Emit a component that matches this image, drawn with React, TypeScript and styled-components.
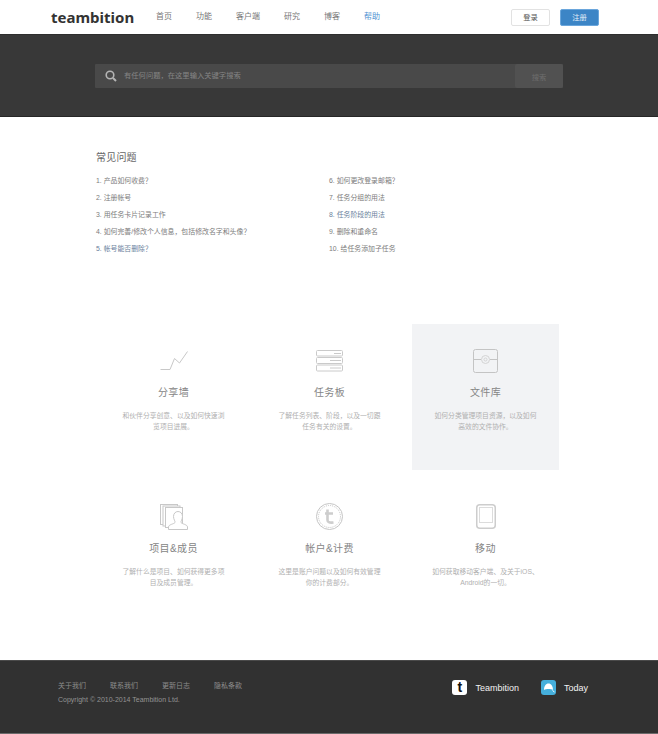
import styled, { createGlobalStyle } from "styled-components";

const leftFaq = [
  "1. 产品如何收费？",
  "2. 注册帐号",
  "3. 用任务卡片记录工作",
  "4. 如何完善/修改个人信息，包括修改名字和头像？",
  "5. 帐号能否删除？",
];

const rightFaq = [
  "6. 如何更改登录邮箱？",
  "7. 任务分组的用法",
  "8. 任务阶段的用法",
  "9. 删除和重命名",
  "10. 给任务添加子任务",
];

const ChartIcon = () => (
  <svg width="28" height="20" viewBox="0 0 28 20" fill="none" stroke="#c8c8c8">
    <path d="M0.5 18.5H10L14.5 7.5L19.5 12L27.5 0.5" />
  </svg>
);

const BoardIcon = () => (
  <svg width="27" height="22" viewBox="0 0 27 22" fill="none" stroke="#cacaca">
    <rect x="0.5" y="0.5" width="26" height="5.5" rx="1" />
    <rect x="0.5" y="7.5" width="26" height="6" rx="1" />
    <rect x="0.5" y="15" width="26" height="6" rx="1" />
    <path d="M18 3.5H25M14 10.5H25M14 18H25" />
  </svg>
);

const FileIcon = () => (
  <svg width="25" height="24" viewBox="0 0 25 24" fill="none" stroke="#c4c4c4">
    <rect x="0.5" y="0.5" width="24" height="23" rx="2" />
    <path d="M0.5 10.5H8M17 10.5H24.5" />
    <circle cx="12.5" cy="10.5" r="4" stroke="#d4d4d4" />
    <circle cx="12.5" cy="10.5" r="1.5" stroke="#d4d4d4" />
  </svg>
);

const ProjectIcon = () => (
  <svg width="28" height="26" viewBox="0 0 28 26" fill="#fff" stroke="#c8c8c8">
    <rect x="0.5" y="0.5" width="17" height="20" />
    <rect x="3" y="2" width="17" height="20" />
    <rect x="5.5" y="3.5" width="17" height="20" />
    <path d="M8.5 25.5V23C8.5 20.5 14 20 15 18.5C15.5 17.5 13.5 15.5 13.5 12.5C13.5 9.5 15.5 7.5 18 7.5C20.5 7.5 22.5 9.5 22.5 12.5C22.5 15.5 20.5 17.5 21 18.5C22 20 27.5 20.5 27.5 23V25.5Z" />
  </svg>
);

const AccountIcon = () => (
  <svg width="27" height="27" viewBox="0 0 27 27" fill="none" stroke="#c4c4c4">
    <circle cx="13.5" cy="13.5" r="13" />
    <circle cx="13.5" cy="13.5" r="11" strokeDasharray="1 1" />
    <path d="M11.5 6.5V17C11.5 19 13 20 17.5 19.5M9 10.5H17" strokeWidth="2.6" stroke="#cdcdcd" />
  </svg>
);

const MobileIcon = () => (
  <svg width="20" height="25" viewBox="0 0 20 25" fill="none" stroke="#cdcdcd">
    <rect x="0.75" y="0.75" width="18.5" height="23.5" rx="3" strokeWidth="1.5" />
    <rect x="3.5" y="3.5" width="13" height="15" stroke="#dcdcdc" />
  </svg>
);

const features = [
  { title: "分享墙", icon: <ChartIcon />, lines: ["和伙伴分享创意、以及如何快速浏", "览项目进展。"] },
  { title: "任务板", icon: <BoardIcon />, lines: ["了解任务列表、阶段，以及一切跟", "任务有关的设置。"] },
  { title: "文件库", icon: <FileIcon />, lines: ["如何分类管理项目资源，以及如何", "高效的文件协作。"], active: true },
  { title: "项目&成员", icon: <ProjectIcon />, lines: ["了解什么是项目、如何获得更多项", "目及成员管理。"] },
  { title: "帐户&计费", icon: <AccountIcon />, lines: ["这里是账户问题以及如何有效管理", "你的计费部分。"] },
  { title: "移动", icon: <MobileIcon />, lines: ["如何获取移动客户端、及关于iOS、", "Android的一切。"] },
];

const App = () => {
  return (
    <Page>
      <GlobalStyle />
      <Header>
        <Logo>teambition</Logo>
        <Nav>
          <NavItem>首页</NavItem>
          <NavItem>功能</NavItem>
          <NavItem>客户端</NavItem>
          <NavItem>研究</NavItem>
          <NavItem>博客</NavItem>
          <NavItem $active>帮助</NavItem>
        </Nav>
        <Actions>
          <LoginButton>登录</LoginButton>
          <SignupButton>注册</SignupButton>
        </Actions>
      </Header>
      <Hero>
        <SearchBar>
          <SearchGlyph width="12" height="12" viewBox="0 0 12 12" fill="none" stroke="#b4b4b4">
            <circle cx="5" cy="5" r="3.8" strokeWidth="1.6" />
            <path d="M8 8L11 11" strokeWidth="2" />
          </SearchGlyph>
          <SearchText>有任何问题，在这里输入关键字搜索</SearchText>
          <SearchButton>搜索</SearchButton>
        </SearchBar>
      </Hero>
      <Faq>
        <FaqTitle>常见问题</FaqTitle>
        <FaqColumns>
          <FaqList>
            {leftFaq.map((q, i) => (
              <FaqItem key={q} $link={i === 4}>{q}</FaqItem>
            ))}
          </FaqList>
          <FaqList>
            {rightFaq.map((q, i) => (
              <FaqItem key={q} $link={i === 2}>{q}</FaqItem>
            ))}
          </FaqList>
        </FaqColumns>
      </Faq>
      <FeatureGrid>
        {features.map((f) => (
          <FeatureCard key={f.title} $active={f.active}>
            <IconSlot>{f.icon}</IconSlot>
            <FeatureTitle>{f.title}</FeatureTitle>
            <FeatureText>
              {f.lines[0]}
              <br />
              {f.lines[1]}
            </FeatureText>
          </FeatureCard>
        ))}
      </FeatureGrid>
      <Footer>
        <FooterLeft>
          <FooterLinks>
            <FooterLink>关于我们</FooterLink>
            <FooterLink>联系我们</FooterLink>
            <FooterLink>更新日志</FooterLink>
            <FooterLink>隐私条款</FooterLink>
          </FooterLinks>
          <Copyright>Copyright © 2010-2014 Teambition Ltd.</Copyright>
        </FooterLeft>
        <Apps>
          <AppLink>
            <TeambitionBadge>t</TeambitionBadge>
            Teambition
          </AppLink>
          <AppLink>
            <svg width="15" height="15" viewBox="0 0 15 15">
              <rect width="15" height="15" rx="3" fill="#45afdc" />
              <path d="M3 10C3 6 5 3.5 7.5 3.5C10 3.5 12 6 12 10C10 8.8 5 8.8 3 10Z" fill="#fff" />
              <path d="M11.5 10.5L13.5 12" stroke="#fff" />
            </svg>
            Today
          </AppLink>
        </Apps>
      </Footer>
    </Page>
  );
};

const GlobalStyle = createGlobalStyle`
  html, body {
    margin: 0;
    padding: 0;
    background: #fff;
  }
`;

const Page = styled.div`
  width: 658px;
  height: 734px;
  overflow: hidden;
  font-family: "Liberation Sans", "Noto Sans CJK SC", sans-serif;
`;

const Header = styled.header`
  height: 34px;
  display: flex;
  align-items: center;
  padding: 0 59px 0 51px;
  background: #fff;
`;

const Logo = styled.div`
  width: 105px;
  font-family: "Noto Sans", sans-serif;
  font-size: 15px;
  font-weight: 700;
  color: #333;
`;

const Nav = styled.nav`
  display: flex;
  gap: 24px;
  flex: 1;
  padding-bottom: 3px;
`;

const NavItem = styled.span<{ $active?: boolean }>`
  font-size: 8px;
  color: ${({ $active }) => ($active ? "#4f93d2" : "#777")};
`;

const Actions = styled.div`
  display: flex;
  gap: 10px;
`;

const LoginButton = styled.div`
  width: 37px;
  height: 15px;
  line-height: 16px;
  text-align: center;
  font-size: 7.3px;
  color: #555;
  background: #fff;
  border: 1px solid #e2e2e2;
  border-radius: 2px;
`;

const SignupButton = styled(LoginButton)`
  color: #e4eef8;
  background: #3c85c6;
  border-color: #6aa6dc;
`;

const Hero = styled.section`
  height: 83px;
  box-sizing: border-box;
  padding: 29px 95px 0;
  background: #383838;
  border-top: 1px solid #2e2e2e;
  border-bottom: 1px solid #262626;
`;

const SearchBar = styled.div`
  height: 24px;
  display: flex;
  align-items: center;
  background: #494949;
  border-radius: 1px;
`;

const SearchGlyph = styled.svg`
  margin-left: 10px;
`;

const SearchText = styled.span`
  flex: 1;
  margin-left: 7px;
  padding-bottom: 2px;
  font-size: 7.3px;
  color: #858585;
`;

const SearchButton = styled.div`
  width: 48px;
  height: 24px;
  line-height: 28px;
  text-align: center;
  font-size: 7.3px;
  color: #6e6e6e;
  background: #515151;
  border-radius: 2px;
`;

const Faq = styled.section`
  height: 207px;
  box-sizing: border-box;
  padding: 35px 0 0 96px;
`;

const FaqTitle = styled.h2`
  margin: 0 0 8px;
  font-size: 10px;
  line-height: 12px;
  font-weight: 400;
  letter-spacing: 0.2px;
  color: #666;
`;

const FaqColumns = styled.div`
  display: flex;
`;

const FaqList = styled.ul`
  width: 233px;
  margin: 0;
  padding: 0;
  list-style: none;
`;

const FaqItem = styled.li<{ $link?: boolean }>`
  height: 17px;
  line-height: 17px;
  font-size: 6.9px;
  color: ${({ $link }) => ($link ? "#6a7f9c" : "#7c7c7c")};
`;

const FeatureGrid = styled.section`
  display: grid;
  grid-template-columns: repeat(3, 147px);
  grid-auto-rows: 146px;
  column-gap: 9px;
  row-gap: 10px;
  padding-left: 100px;
  height: 336px;
  box-sizing: border-box;
`;

const FeatureCard = styled.article<{ $active?: boolean }>`
  display: flex;
  flex-direction: column;
  align-items: center;
  text-align: center;
  background: ${({ $active }) => ($active ? "#f2f3f5" : "transparent")};
`;

const IconSlot = styled.div`
  height: 27px;
  margin-top: 23px;
  display: flex;
  align-items: center;
  justify-content: center;
`;

const FeatureTitle = styled.h3`
  margin: 12px 0 0;
  font-size: 10px;
  line-height: 14px;
  font-weight: 400;
  letter-spacing: 0.4px;
  color: #858585;
`;

const FeatureText = styled.p`
  margin: 11px 0 0;
  font-size: 6.8px;
  line-height: 10.5px;
  color: #b0b0b0;
`;

const Footer = styled.footer`
  height: 74px;
  box-sizing: border-box;
  display: flex;
  justify-content: space-between;
  padding: 20px 70px 0 58px;
  background: #313131;
  border-top: 1px solid #4a4a4a;
  border-bottom: 1px solid #6a6a6a;
`;

const FooterLeft = styled.div`
  display: flex;
  flex-direction: column;
  gap: 4px;
`;

const FooterLinks = styled.div`
  display: flex;
  gap: 24px;
`;

const FooterLink = styled.span`
  font-size: 7px;
  line-height: 10px;
  color: #8c8c8c;
`;

const Copyright = styled.div`
  font-size: 7px;
  line-height: 10px;
  color: #939393;
`;

const Apps = styled.div`
  display: flex;
  gap: 22px;
  height: 15px;
  margin-top: -1px;
`;

const AppLink = styled.div`
  display: flex;
  align-items: center;
  gap: 8px;
  font-size: 9px;
  color: #f2f2f2;
`;

const TeambitionBadge = styled.span`
  width: 15px;
  height: 15px;
  border-radius: 3px;
  background: #fff;
  color: #111;
  font-size: 14px;
  line-height: 14px;
  font-weight: 700;
  text-align: center;
`;

export default App;
